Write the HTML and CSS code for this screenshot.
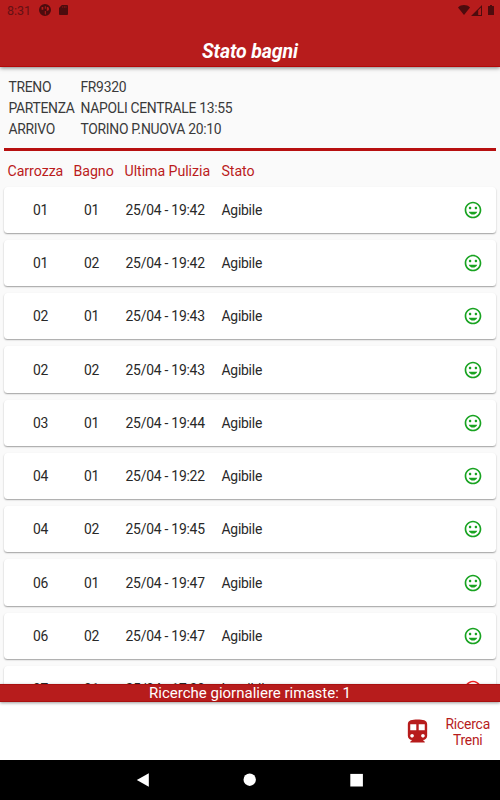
FILE: index.html
```html
<!DOCTYPE html>
<html lang="it">
<head>
<meta charset="utf-8">
<title>Stato bagni</title>
<link rel="stylesheet" href="styles.css">
</head>
<body>
<svg width="0" height="0" class="defs">
  <symbol id="mood" viewBox="0 0 24 24"><path d="M11.99 2C6.47 2 2 6.48 2 12s4.47 10 9.99 10C17.52 22 22 17.52 22 12S17.52 2 11.99 2zM12 20c-4.42 0-8-3.58-8-8s3.58-8 8-8 8 3.58 8 8-3.58 8-8 8zm3.5-9c.83 0 1.5-.67 1.5-1.5S16.33 8 15.5 8 14 8.67 14 9.5s.67 1.5 1.5 1.5zm-7 0c.83 0 1.5-.67 1.5-1.5S9.33 8 8.5 8 7 8.67 7 9.5 7.67 11 8.5 11zm3.5 6.5c2.33 0 4.31-1.46 5.11-3.5H6.89c.8 2.04 2.78 3.5 5.11 3.5z"/></symbol>
</svg>
<div class="app">
  <header class="top">
    <div class="status">
      <span class="clock">8:31</span>
      <svg class="s-app" viewBox="0 0 12 12"><path fill-rule="evenodd" d="M6 0a6 6 0 1 0 0 12A6 6 0 0 0 6 0zM2.600 3h1.700v2.800H2.600zM5.800 2.200h1v2.600h-1zM7.800 3h1.300q1 .8 1 2.600-.5 1.300-2.300 1.300zM5.800 7h1v3.400h-1z"/></svg>
      <svg class="s-sd" viewBox="0 0 10 11"><path fill-rule="evenodd" d="M3.2 0H9a1 1 0 0 1 1 1v9a1 1 0 0 1-1 1H1a1 1 0 0 1-1-1V3.2zM3.7 1.5v1.2h.9v-1.2zm1.8 0v1.2h.9v-1.2zm1.8 0v1.2h.9v-1.2z"/></svg>
      <span class="grow"></span>
      <svg class="s-wifi" viewBox="0 0 12 10"><path d="M0 2.4C3.4-.7 8.600-.7 12 2.400L6 10z"/></svg>
      <svg class="s-cell" viewBox="0 0 11 11"><path fill-rule="evenodd" d="M11 0v11H0zM10 2.400 7.200 5.200V10H10z"/></svg>
      <svg class="s-batt" viewBox="0 0 6 10"><path d="M2 0h2v1h1.500q.5 0 .5.500v8q0 .5-.5.500h-5Q0 10 0 9.500v-8Q0 1 .5 1H2z"/></svg>
    </div>
    <h1>Stato bagni</h1>
  </header>
  <main>
    <dl class="trip">
      <dt>TRENO</dt><dd>FR9320</dd>
      <dt>PARTENZA</dt><dd>NAPOLI CENTRALE 13:55</dd>
      <dt>ARRIVO</dt><dd>TORINO P.NUOVA 20:10</dd>
    </dl>
    <div class="rule"></div>
    <div class="heads"><span>Carrozza</span><span>Bagno</span><span>Ultima Pulizia</span><span>Stato</span></div>
    <div class="list">
      <div class="card"><span>01</span><span>01</span><span>25/04 - 19:42</span><span>Agibile</span><svg class="face"><use href="#mood"/></svg></div>
      <div class="card"><span>01</span><span>02</span><span>25/04 - 19:42</span><span>Agibile</span><svg class="face"><use href="#mood"/></svg></div>
      <div class="card"><span>02</span><span>01</span><span>25/04 - 19:43</span><span>Agibile</span><svg class="face"><use href="#mood"/></svg></div>
      <div class="card"><span>02</span><span>02</span><span>25/04 - 19:43</span><span>Agibile</span><svg class="face"><use href="#mood"/></svg></div>
      <div class="card"><span>03</span><span>01</span><span>25/04 - 19:44</span><span>Agibile</span><svg class="face"><use href="#mood"/></svg></div>
      <div class="card"><span>04</span><span>01</span><span>25/04 - 19:22</span><span>Agibile</span><svg class="face"><use href="#mood"/></svg></div>
      <div class="card"><span>04</span><span>02</span><span>25/04 - 19:45</span><span>Agibile</span><svg class="face"><use href="#mood"/></svg></div>
      <div class="card"><span>06</span><span>01</span><span>25/04 - 19:47</span><span>Agibile</span><svg class="face"><use href="#mood"/></svg></div>
      <div class="card"><span>06</span><span>02</span><span>25/04 - 19:47</span><span>Agibile</span><svg class="face"><use href="#mood"/></svg></div>
      <div class="card"><span>07</span><span>01</span><span>25/04 - 17:30</span><span>Inagibile</span><svg class="face bad"><use href="#mood"/></svg></div>
    </div>
  </main>
  <div class="quota">Ricerche giornaliere rimaste: 1</div>
  <div class="bottom">
    <svg class="train" viewBox="0 0 24 24"><path d="M12 2c-4.420 0-8 .5-8 4v9.500C4 17.430 5.570 19 7.500 19L6 20.500v.5h12v-.5L16.500 19c1.930 0 3.500-1.570 3.500-3.500V6c0-3.500-3.580-4-8-4zM7.500 17c-.83 0-1.500-.67-1.500-1.500S6.670 14 7.500 14s1.500.67 1.500 1.500S8.330 17 7.500 17zm3.500-6H6V6h5v5zm5.500 6c-.83 0-1.500-.67-1.500-1.500s.67-1.500 1.500-1.500 1.500.67 1.500 1.500-.67 1.500-1.500 1.500zm1.500-6h-5V6h5v5z"/></svg>
    <span class="search">Ricerca<br>Treni</span>
  </div>
  <nav class="sys">
    <svg viewBox="0 0 14 14"><path d="M.8 7 12.800.3v13.400z"/></svg>
    <svg viewBox="0 0 14 14"><circle cx="6.700" cy="6.700" r="6.200"/></svg>
    <svg viewBox="0 0 14 14"><path d="M.3.900h12.600v12.600H.3z"/></svg>
  </nav>
</div>
</body>
</html>
```
FILE: styles.css
```css
* { box-sizing: border-box; margin: 0; padding: 0; }
body { width: 500px; height: 800px; overflow: hidden; font-family: Roboto, "Liberation Sans", sans-serif; background: #fafafa; }
svg { display: block; fill: currentColor; flex: none; }
.defs { position: absolute; }
.app { height: 800px; display: flex; flex-direction: column; }
.top { height: 66.500px; flex: none; background: #b71c1c; border-bottom: 1px solid #b30808; box-shadow: 0 1px 4px rgba(0,0,0,.5); z-index: 1; }
.status { height: 20px; display: flex; align-items: center; padding: 0 6.500px 0 7px; color: #4d0c0e; }
.clock { width: 32px; font-size: 12.500px; color: #651114; }
.s-app { width: 12px; height: 12px; margin-right: 8px; }
.s-sd { width: 9px; height: 10px; }
.grow { flex: 1; }
.s-wifi { width: 12px; height: 10px; margin-right: 1px; }
.s-cell { width: 11px; height: 11px; margin-right: 6px; }
.s-batt { width: 6px; height: 10px; }
h1 { margin-top: 20px; text-align: center; font-size: 19.500px; letter-spacing: -.1px; line-height: 24px; font-weight: 700; font-style: italic; color: #fff; }
main { flex: 1; min-height: 0; overflow: hidden; padding: 10px 3.700px 0 4.200px; }
.trip { display: grid; grid-template-columns: 72px auto; padding-left: 4.300px; font-size: 13.900px; letter-spacing: -.3px; line-height: 21px; color: #3a3a3a; }
.rule { height: 3px; margin-top: 8.800px; background: #b71010; }
.heads, .card { display: grid; align-items: center; }
.heads { grid-template-columns: 66px 51px 97px 1fr; height: 35.400px; padding: 4.500px 0 0 3.300px; font-size: 14.200px; letter-spacing: -.05px; color: #bb1c1c; }
.list { display: flex; flex-direction: column; gap: 7px; }
.card { grid-template-columns: 51px 41.500px 96px 1fr 20px; height: 46.250px; flex: none; padding: 0 13px 0 28.800px; background: #fff; border-radius: 3.500px; box-shadow: 0 1px 1.500px rgba(0,0,0,.36); font-size: 13.900px; letter-spacing: -.23px; color: #282828; }
.card span { white-space: nowrap; }
.face { width: 20px; height: 20px; color: #18a321; }
.face.bad { color: #f02020; }
.quota { height: 18px; flex: none; background: #b71c1c; border: solid #a91010; border-width: 1px 0; color: #fff; text-align: center; font-size: 15px; line-height: 16px; z-index: 1; box-shadow: 0 1px 3px rgba(0,0,0,.4); }
.bottom { height: 58px; flex: none; display: flex; justify-content: flex-end; align-items: center; gap: 13px; padding: 1px 10px 0 0; background: #fff; color: #b71c1c; }
.train { width: 29px; height: 29px; }
.search { text-align: center; font-size: 13.900px; letter-spacing: -.25px; line-height: 16px; }
.search::first-line { letter-spacing: -.2px; }
.sys { height: 40px; flex: none; display: flex; justify-content: center; align-items: center; gap: 93px; background: #000; color: #fff; }
.sys svg { width: 14px; height: 14px; }
```
